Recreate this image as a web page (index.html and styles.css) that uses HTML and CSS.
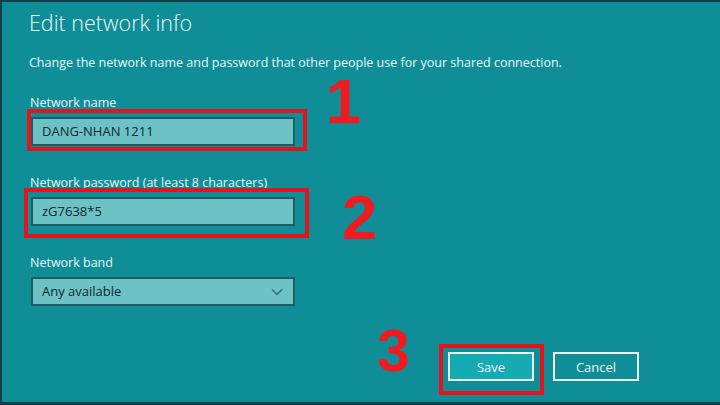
FILE: index.html
```html
<!DOCTYPE html>
<html>
<head>
<meta charset="utf-8">
<link rel="stylesheet" href="styles.css">
</head>
<body>
<div class="frame">
  <div class="panel">
    <h1 class="title">Edit network info</h1>
    <p class="desc">Change the network name and password that other people use for your shared connection.</p>

    <div class="field">
      <div class="label">Network name</div>
      <div class="input">DANG-NHAN 1211</div>
    </div>

    <div class="field">
      <div class="label">Network password (at least 8 characters)</div>
      <div class="input">zG7638*5</div>
    </div>

    <div class="field">
      <div class="label">Network band</div>
      <div class="input select">
        <span>Any available</span>
        <svg class="chev" width="12" height="8" viewBox="0 0 12 8"><path d="M1 1.5 L6 6.5 L11 1.5" fill="none" stroke="#2f6f74" stroke-width="1.4"/></svg>
      </div>
    </div>

    <div class="actions">
      <div class="btn primary">Save</div>
      <div class="btn">Cancel</div>
    </div>

    <div class="mark box1"></div>
    <div class="mark box2"></div>
    <div class="mark box3"></div>
    <div class="num n1">1</div>
    <div class="num n2">2</div>
    <div class="num n3">3</div>
  </div>
</div>
</body>
</html>
```
FILE: styles.css
```css
html, body {
  margin: 0;
  padding: 0;
}
body {
  width: 720px;
  height: 405px;
  overflow: hidden;
  background: #0c3940;
  font-family: "Open Sans", "Noto Sans", sans-serif;
}
.frame {
  box-sizing: border-box;
  width: 720px;
  height: 405px;
  border-top: 2px solid #123f47;
  border-bottom: 3px solid #123f47;
  border-left: 2px solid #123f47;
}
.panel {
  position: relative;
  box-sizing: border-box;
  height: 100%;
  background: #0f8e97;
  padding: 6px 0 0 27px;
  color: #eaf6f7;
}
.title {
  margin: 0;
  font-weight: 300;
  font-size: 21.5px;
  line-height: 30px;
  color: #eef8f8;
}
.desc {
  margin: 16px 0 0 0;
  font-size: 12.5px;
  line-height: 18px;
}
.field {
  margin-top: 22px;
  width: 264px;
}
.field + .field {
  margin-top: 28px;
}
.label {
  font-size: 12.5px;
  line-height: 17px;
  margin-left: 1px;
}
.input {
  box-sizing: border-box;
  margin-top: 6px;
  margin-left: 2px;
  width: 264px;
  height: 29px;
  border: 2px solid #1c5d64;
  background: #6cc2c5;
  color: #10292c;
  font-size: 13px;
  line-height: 25px;
  padding-left: 9px;
  display: flex;
  align-items: center;
}
.select {
  justify-content: space-between;
  padding-right: 10px;
}
.chev {
  display: block;
}
.actions {
  display: flex;
  justify-content: flex-end;
  gap: 19px;
  margin-top: 46px;
  margin-right: 81px;
}
.btn {
  box-sizing: border-box;
  width: 86px;
  height: 29px;
  border: 2px solid #e8f4f5;
  color: #eef8f8;
  font-size: 13px;
  display: flex;
  align-items: center;
  justify-content: center;
}
.btn.primary {
  background: #16aab3;
}
.mark {
  position: absolute;
  box-sizing: border-box;
  border: 4px solid #e3141b;
}
.box1 { left: 25px; top: 107px; width: 280px; height: 42px; }
.box2 { left: 22px; top: 186px; width: 285px; height: 50px; }
.box3 { left: 437px; top: 342px; width: 105px; height: 51px; }
.num {
  position: absolute;
  font-family: "Liberation Sans", Arial, sans-serif;
  font-weight: 700;
  color: #f01a1f;
  line-height: 1;
}
.n1 { left: 324px; top: 68px; font-size: 63px; }
.n2 { left: 340px; top: 184px; font-size: 63px; }
.n3 { left: 375px; top: 320px; font-size: 59px; }
```
